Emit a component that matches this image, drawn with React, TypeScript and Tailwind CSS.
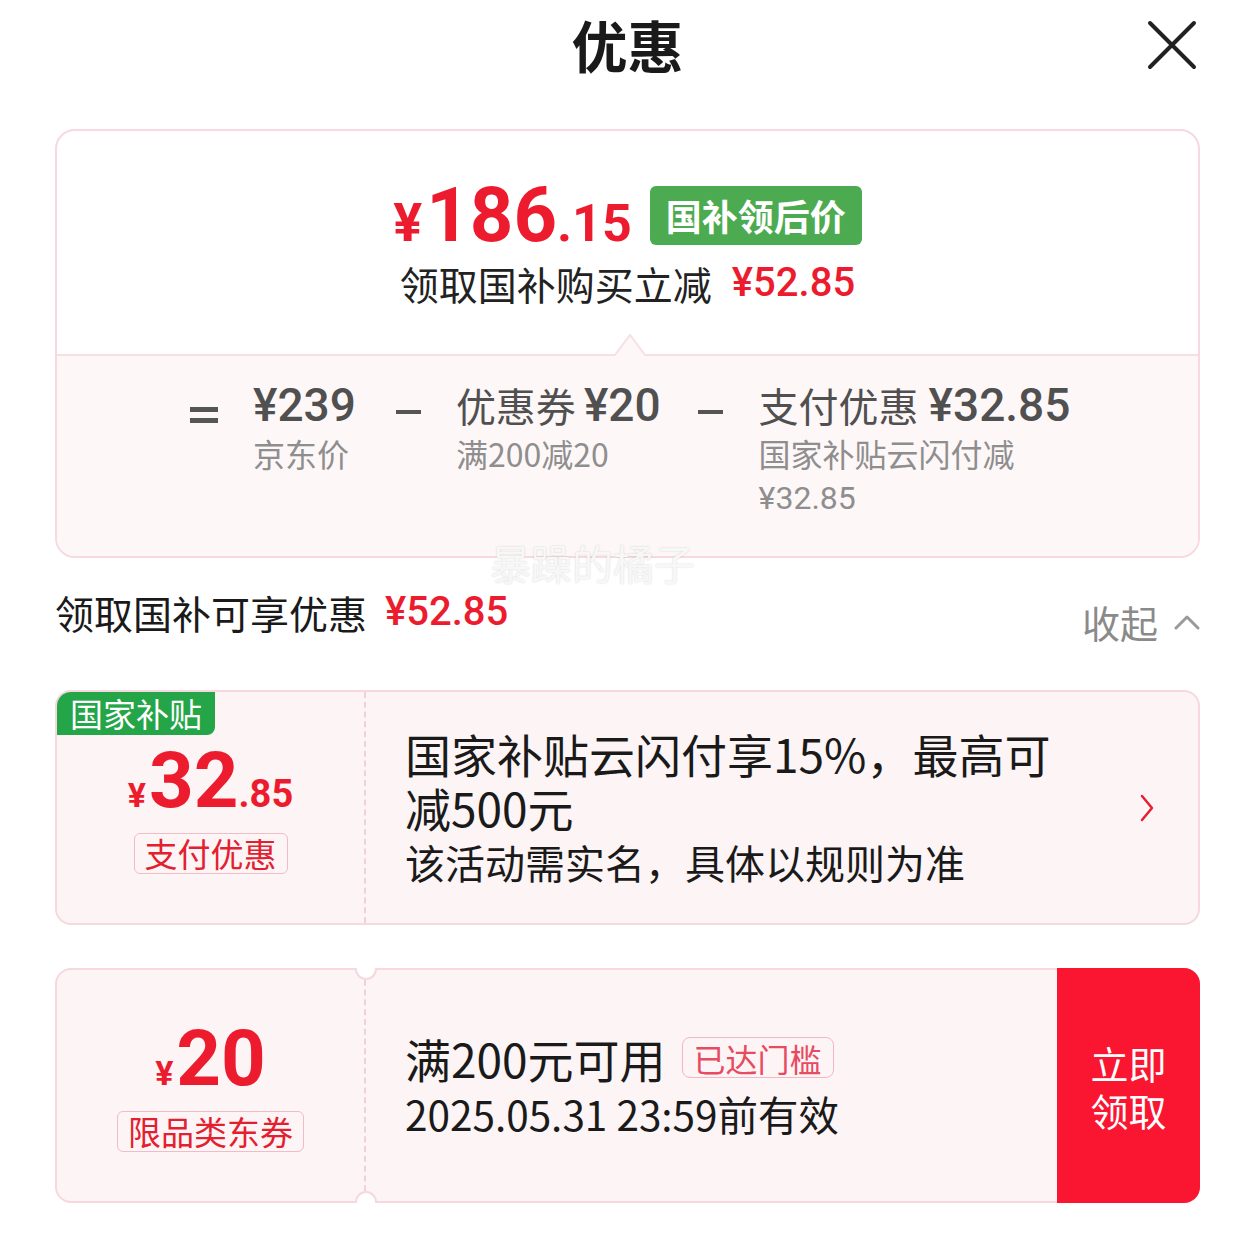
import React from "react";

const NUM = "font-['Roboto','Noto_Sans_CJK_SC',sans-serif]";

function CloseIcon() {
  return (
    <svg width="50" height="50" viewBox="0 0 50 50" fill="none">
      <path d="M3 3 L47 47 M47 3 L3 47" stroke="#222" strokeWidth="4" strokeLinecap="round" />
    </svg>
  );
}

function ChevronUp() {
  return (
    <svg width="26" height="16" viewBox="0 0 26 16" fill="none">
      <polyline points="2,14 13,3 24,14" stroke="#9a9a9a" strokeWidth="3" strokeLinecap="round" strokeLinejoin="round" />
    </svg>
  );
}

function ChevronRight() {
  return (
    <svg width="16" height="28" viewBox="0 0 16 28" fill="none">
      <polyline points="3,2 13,14 3,26" stroke="#e3202f" strokeWidth="2.5" strokeLinecap="round" strokeLinejoin="round" />
    </svg>
  );
}

function Minus() {
  return <div className="mt-[30px] h-[4px] w-[25px] shrink-0 bg-[#555]" />;
}

function CouponLeft({ yuan, cents, tag }: { yuan: string; cents?: string; tag: string }) {
  return (
    <div className="flex w-[309px] shrink-0 flex-col items-center border-r-2 border-dashed border-[#f2d0d7] pt-[50px]">
      <div className={`flex items-baseline font-bold leading-none text-[#ec1c2e] ${NUM}`}>
        <span className="text-[34px]">¥</span>
        <span className="ml-[3px] text-[78px]">{yuan}</span>
        {cents && <span className="text-[38px]">{cents}</span>}
      </div>
      <div className="mt-[13px] flex h-[41px] items-center rounded-[6px] border-[1.5px] border-[#f0bcc5] px-[10px] text-[33px] leading-none text-[#e3202f]">
        {tag}
      </div>
    </div>
  );
}

export default function App() {
  return (
    <div className="relative min-h-[1233px] w-full bg-white pl-[55px] pr-[56px] font-['Noto_Sans_CJK_SC',sans-serif] text-[#1f1f1f]">
      {/* header */}
      <div className="relative flex h-[88px] items-center justify-center">
        <h1 className="text-[56px] font-bold leading-none text-[#1a1a1a]">优惠</h1>
        <button type="button" className="absolute right-[3px] top-[20px]">
          <CloseIcon />
        </button>
      </div>

      {/* summary card */}
      <div className="mt-[41px] flex h-[429px] flex-col overflow-hidden rounded-[20px] border-2 border-[#f7d9df]">
        <div className="relative flex h-[223px] shrink-0 flex-col items-center pt-[49px]">
          <div className="flex h-[70px] items-center gap-[18px]">
            <div className={`flex items-baseline font-bold leading-none text-[#ec1c2e] ${NUM}`}>
              <span className="text-[54px]">¥</span>
              <span className="ml-[4px] text-[76px]">186</span>
              <span className="text-[52px]">.15</span>
            </div>
            <div className="flex h-[59px] items-center rounded-[6px] bg-[#4caa50] px-[16px] text-[36px] font-bold leading-none text-white">
              国补领后价
            </div>
          </div>
          <div className="mt-[11px] flex h-[44px] items-center leading-none">
            <span className="text-[39px] text-[#222]">领取国补购买立减</span>
            <span className={`ml-[20px] text-[40px] font-medium text-[#ec1c2e] ${NUM}`}>¥52.85</span>
          </div>
          <svg className="absolute bottom-[-2px] left-[558px] z-10" width="30" height="22" viewBox="0 0 30 22">
            <polygon points="0,22 15,1 30,22" fill="#fef7f8" />
            <polyline points="0,21 15,1 30,21" fill="none" stroke="#f7e0e5" strokeWidth="2" />
          </svg>
        </div>
        <div className="flex flex-1 items-start border-t-2 border-[#f7e0e5] bg-[#fef7f8] pl-[133px] pt-[24px] text-[#505050]">
          <div className="mt-[27px] flex w-[28px] shrink-0 flex-col gap-[6px]">
            <div className="h-[5px] bg-[#555]" />
            <div className="h-[5px] bg-[#555]" />
          </div>
          <div className="ml-[35px] flex flex-col">
            <div className={`h-[50px] text-[46px] font-medium leading-[50px] ${NUM}`}>¥239</div>
            <div className="mt-[2px] text-[32px] leading-[42px] text-[#8e8e8e]">京东价</div>
          </div>
          <div className="ml-[40px]">
            <Minus />
          </div>
          <div className="ml-[35px] flex flex-col">
            <div className="flex h-[50px] items-center gap-[8px] leading-none">
              <span className="text-[40px]">优惠券</span>
              <span className={`text-[46px] font-medium ${NUM}`}>¥20</span>
            </div>
            <div className="mt-[2px] text-[32px] leading-[42px] text-[#8e8e8e]">满200减20</div>
          </div>
          <div className="ml-[37px]">
            <Minus />
          </div>
          <div className="ml-[36px] flex flex-col">
            <div className="flex h-[50px] items-center gap-[10px] leading-none">
              <span className="text-[40px]">支付优惠</span>
              <span className={`text-[46px] font-medium ${NUM}`}>¥32.85</span>
            </div>
            <div className={`mt-[2px] text-[32px] leading-[42px] text-[#8e8e8e]`}>
              国家补贴云闪付减
              <br />
              <span className={NUM}>¥32.85</span>
            </div>
          </div>
        </div>
      </div>

      {/* watermark */}
      <div className="pointer-events-none absolute left-[490px] top-[542px] text-[41px] leading-none text-[#f7f7f7] [text-shadow:0_0_2px_rgba(0,0,0,0.16)]">
        暴躁的橘子
      </div>

      {/* section label */}
      <div className="mt-[32px] flex items-start justify-between">
        <div className="flex h-[44px] items-center leading-none">
          <span className="text-[39px] text-[#1a1a1a]">领取国补可享优惠</span>
          <span className={`ml-[18px] text-[40px] font-medium text-[#ec1c2e] ${NUM}`}>¥52.85</span>
        </div>
        <div className="mt-[10px] flex h-[44px] items-center gap-[16px] text-[38px] leading-none text-[#8a8a8a]">
          <span>收起</span>
          <ChevronUp />
        </div>
      </div>

      {/* national subsidy card */}
      <div className="relative mt-[46px] flex h-[235px] overflow-hidden rounded-[16px] border-2 border-[#f6d8de] bg-[#fdf4f5]">
        <div className="absolute left-0 top-0 flex h-[43px] w-[158px] items-center justify-center rounded-br-[8px] bg-[#23a548] text-[33px] leading-none text-white">
          国家补贴
        </div>
        <CouponLeft yuan="32" cents=".85" tag="支付优惠" />
        <div className="flex flex-1 items-center justify-between pl-[39px] pr-[43px]">
          <div className="flex flex-col text-[#1a1a1a]">
            <div className="text-[46px] leading-[54px]">
              国家补贴云闪付享15%，最高可
              <br />
              减500元
            </div>
            <div className="mt-[1px] text-[40px] leading-[54px]">该活动需实名，具体以规则为准</div>
          </div>
          <ChevronRight />
        </div>
      </div>

      {/* coupon card */}
      <div className="relative mt-[43px] flex h-[235px] rounded-[16px] border-2 border-[#f6d8de] bg-[#fdf4f5]">
        <div className="absolute left-[298px] top-[-2px] h-[12px] w-[22px] rounded-b-full border-2 border-t-0 border-[#f6d8de] bg-white" />
        <div className="absolute bottom-[-2px] left-[298px] h-[12px] w-[22px] rounded-t-full border-2 border-b-0 border-[#f6d8de] bg-white" />
        <CouponLeft yuan="20" tag="限品类东券" />
        <div className="flex flex-1 flex-col justify-center pl-[39px]">
          <div className="flex h-[56px] items-center leading-none">
            <span className="text-[46px] text-[#1a1a1a]">满200元可用</span>
            <span className="ml-[16px] flex h-[41px] items-center rounded-[8px] border-[1.5px] border-[#f2b7c2] px-[11px] text-[32px] text-[#e84a62]">
              已达门槛
            </span>
          </div>
          <div className="text-[40.5px] leading-[56px] text-[#1a1a1a]">2025.05.31 23:59前有效</div>
        </div>
        <button
          type="button"
          className="-my-[2px] -mr-[2px] flex w-[143px] shrink-0 items-center justify-center rounded-r-[16px] bg-[#fa1530] text-center text-[38px] leading-[47px] text-white"
        >
          <span>
            立即
            <br />
            领取
          </span>
        </button>
      </div>
    </div>
  );
}
